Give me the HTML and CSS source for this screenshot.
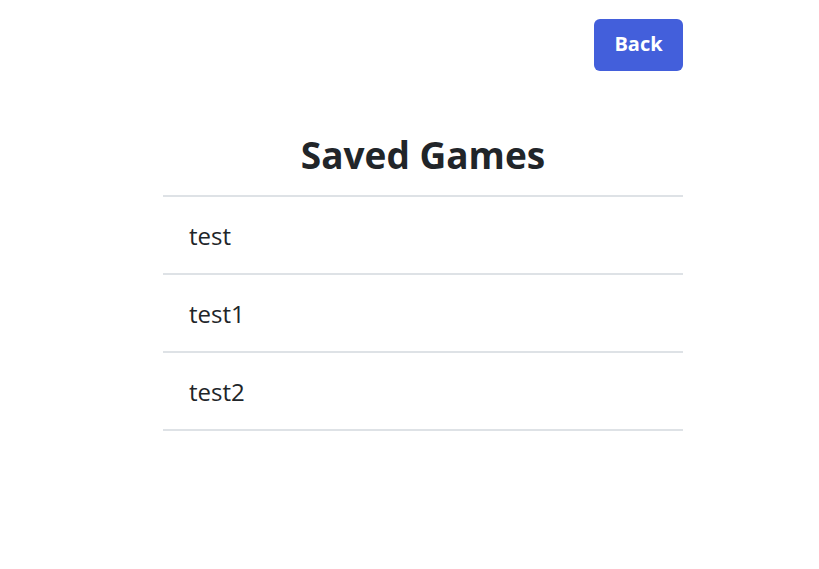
FILE: index.html
```html
<!DOCTYPE html>
<html>
<head>
<meta charset="utf-8">
<link rel="stylesheet" href="styles.css">
</head>
<body>
<div class="page">
  <div class="topbar">
    <button class="btn-back">Back</button>
  </div>
  <h1 class="title">Saved Games</h1>
  <ul class="games">
    <li class="game">test</li>
    <li class="game">test1</li>
    <li class="game">test2</li>
  </ul>
</div>
</body>
</html>
```
FILE: styles.css
```css
html, body {
  margin: 0;
  padding: 0;
  background: #fff;
}
body {
  font-family: "Open Sans", "Noto Sans", sans-serif;
  color: #212529;
}
.page {
  width: 520px;
  margin-left: 163px;
}
.topbar {
  display: flex;
  justify-content: flex-end;
  padding-top: 19px;
}
.btn-back {
  height: 52px;
  width: 89px;
  background: #435fdb;
  color: #fff;
  border: none;
  border-radius: 6px;
  font-family: "Open Sans", "Noto Sans", sans-serif;
  font-weight: 700;
  font-size: 20px;
  padding: 0 0 4px;
}
.title {
  margin: 56px 0 0;
  height: 55px;
  line-height: 55px;
  padding-bottom: 13px;
  text-align: center;
  font-size: 37px;
  font-weight: 700;
}
.games {
  list-style: none;
  margin: 0;
  padding: 0;
  border-top: 2px solid #dee2e6;
}
.game {
  height: 74px;
  line-height: 74px;
  padding: 2px 0 0 26px;
  font-size: 24px;
  border-bottom: 2px solid #dee2e6;
}
```
